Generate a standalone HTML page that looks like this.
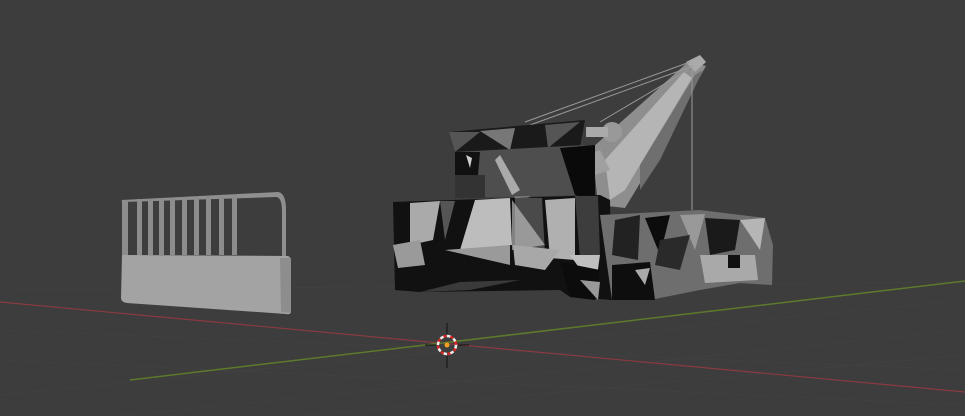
<html><head><style>body{margin:0;background:#3d3d3d;overflow:hidden}</style></head><body>
<svg width="965" height="416" viewBox="0 0 965 416" xmlns="http://www.w3.org/2000/svg">
<rect width="965" height="416" fill="#3d3d3d"/>
<g stroke="#434343" stroke-width="1" opacity="0.6">
<line x1="0" y1="330" x2="965" y2="370"/><line x1="0" y1="360" x2="965" y2="405"/>
<line x1="0" y1="395" x2="965" y2="300"/><line x1="120" y1="416" x2="965" y2="330"/>
<line x1="0" y1="290" x2="965" y2="282"/><line x1="300" y1="416" x2="965" y2="355"/>
</g>
<line x1="0" y1="302" x2="965" y2="392" stroke="#8a3a40" stroke-width="1.2"/>
<line x1="130" y1="380" x2="965" y2="281" stroke="#5d7a2c" stroke-width="1.5"/>
<!-- left barrier -->
<path d="M121 200 L278 192 Q286 193 286 210 L286 256 L282 256 L282 212 Q282 197 276 197 L125 202 Z" fill="#8f8f8f"/>
<g fill="#8c8c8c"><rect x="122" y="200" width="6" height="55"/><rect x="137" y="199" width="5" height="56"/><rect x="148" y="199" width="5" height="56"/><rect x="159" y="198" width="5" height="57"/><rect x="170" y="198" width="5" height="57"/><rect x="182" y="197" width="5" height="58"/><rect x="194" y="197" width="5" height="58"/><rect x="206" y="196" width="5" height="59"/><rect x="219" y="196" width="5" height="59"/><rect x="232" y="195" width="5" height="60"/></g>
<path d="M122 255 L288 256 Q291 257 291 262 L291 312 Q290 315 286 314 L127 303 Q121 302 121 298 Z" fill="#a3a3a3"/>
<path d="M280 258 L291 258 L291 313 L281 312 Z" fill="#8d8d8d"/>
<!-- crane boom -->
<path d="M592 148 L688 62 L706 66 L645 175 L625 208 L598 205 Z" fill="#8e8e8e"/>
<path d="M605 160 L684 72 L692 78 L625 190 L610 200 Z" fill="#b5b5b5"/>
<path d="M640 165 L695 75 L703 70 L660 160 L640 190 Z" fill="#6f6f6f"/>
<path d="M500 190 L600 150 L610 170 L520 200 Z" fill="#a0a0a0"/>
<path d="M686 62 L700 55 L706 62 L695 72 Z" fill="#aaa"/>
<g stroke="#9a9a9a" stroke-width="1" fill="none"><line x1="525" y1="122" x2="690" y2="62"/><line x1="530" y1="125" x2="693" y2="66"/><line x1="600" y1="122" x2="688" y2="70"/><line x1="692" y1="70" x2="692" y2="210"/></g>
<circle cx="612" cy="132" r="10" fill="#999"/><rect x="586" y="127" width="22" height="10" fill="#aaa"/>
<!-- cab -->
<path d="M449 132 L585 120 L580 147 L455 152 Z" fill="#1a1a1a"/>
<path d="M449 132 L480 132 L455 152 Z" fill="#555"/><path d="M480 131 L515 128 L510 150 Z" fill="#777"/><path d="M545 125 L580 122 L548 148 Z" fill="#555"/>
<path d="M455 152 L585 145 L595 195 L455 198 Z" fill="#4e4e4e"/>
<path d="M455 152 L480 152 L478 175 L455 175 Z" fill="#111"/><path d="M466 155 L472 158 L470 168 Z" fill="#ccc"/>
<path d="M500 155 L520 190 L512 195 L495 160 Z" fill="#aaa"/>
<path d="M560 148 L595 145 L595 200 L575 195 Z" fill="#0a0a0a"/>
<path d="M455 175 L485 175 L485 198 L455 198 Z" fill="#333"/>
<!-- front body -->
<path d="M393 202 L600 195 L610 200 L612 300 L570 297 L560 290 L420 292 L395 290 Z" fill="#111"/>
<path d="M410 203 L440 201 L433 240 L410 245 Z" fill="#aaa"/><path d="M440 201 L455 201 L445 240 Z" fill="#555"/>
<path d="M475 200 L510 198 L512 245 L460 250 Z" fill="#bdbdbd"/><path d="M445 250 L510 245 L510 265 Z" fill="#9a9a9a"/>
<path d="M515 198 L542 198 L545 255 L515 250 Z" fill="#4a4a4a"/><path d="M512 200 L545 245 L512 250 Z" fill="#cfcfcf" opacity=".6"/>
<path d="M545 200 L575 198 L575 260 L550 258 Z" fill="#b0b0b0"/><path d="M575 196 L598 196 L600 255 L580 258 Z" fill="#3d3d3d"/>
<path d="M393 245 L420 240 L425 265 L398 268 Z" fill="#9a9a9a"/>
<path d="M513 245 L560 250 L545 270 L515 265 Z" fill="#a8a8a8"/><path d="M570 255 L600 255 L595 290 Z" fill="#c0c0c0"/>
<path d="M560 262 L600 270 L595 300 L570 297 Z" fill="#0c0c0c"/><path d="M580 280 L600 282 L598 300 Z" fill="#999"/>
<path d="M420 292 L460 282 L520 280 L470 290 Z" fill="#3a3a3a"/>
<!-- rear deck -->
<path d="M600 215 L700 210 L765 218 L773 245 L772 285 L740 283 L700 290 L650 300 L612 300 Z" fill="#6e6e6e"/>
<path d="M615 220 L640 215 L638 260 L612 255 Z" fill="#222"/><path d="M645 218 L670 215 L660 255 Z" fill="#0c0c0c"/>
<path d="M680 215 L705 214 L695 250 Z" fill="#999"/><path d="M705 218 L740 220 L735 250 L710 255 Z" fill="#1a1a1a"/>
<path d="M740 220 L765 218 L760 250 Z" fill="#b5b5b5"/><path d="M700 255 L755 255 L758 280 L705 283 Z" fill="#a9a9a9"/>
<path d="M612 265 L650 262 L655 300 L612 300 Z" fill="#0e0e0e"/><path d="M635 270 L650 268 L645 285 Z" fill="#aaa"/>
<path d="M660 240 L690 235 L680 270 L655 265 Z" fill="#2a2a2a"/><path d="M728 255 L740 255 L740 268 L728 268 Z" fill="#111"/>
<!-- 3D cursor -->
<circle cx="447" cy="345" r="9" fill="none" stroke="#eee" stroke-width="2.5" stroke-dasharray="4 3"/>
<circle cx="447" cy="345" r="9" fill="none" stroke="#d22" stroke-width="2.5" stroke-dasharray="3 4" stroke-dashoffset="3.5"/>
<g stroke="#111" stroke-width="1"><line x1="447" y1="323" x2="447" y2="334"/><line x1="447" y1="356" x2="447" y2="368"/><line x1="425" y1="345" x2="436" y2="345"/><line x1="458" y1="345" x2="469" y2="345"/></g>
<circle cx="447" cy="345" r="2.5" fill="#f0a020"/>
</svg>
</body></html>
